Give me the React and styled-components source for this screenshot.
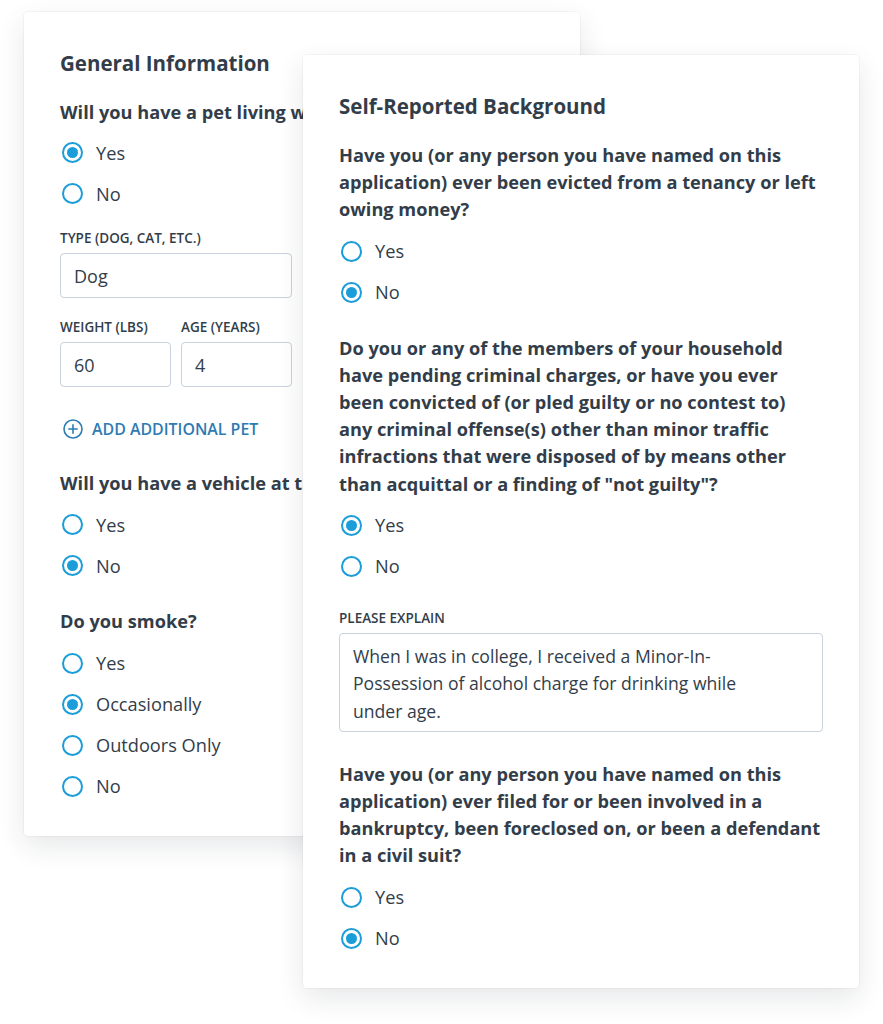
import styled, { createGlobalStyle } from "styled-components";

const GlobalStyle = createGlobalStyle`
  body {
    margin: 0;
    background: #ffffff;
    font-family: "Open Sans", "Noto Sans", sans-serif;
    color: #323d49;
  }
`;

const Stage = styled.div`
  width: 883px;
  height: 1024px;
  display: grid;
  grid-template-columns: 1fr;
  grid-template-rows: 1fr;
  overflow: hidden;
`;

const Card = styled.div`
  grid-area: 1 / 1;
  align-self: start;
  justify-self: start;
  width: 556px;
  box-sizing: border-box;
  margin: ${(p) => p.$top}px 0 0 ${(p) => p.$left}px;
  padding: 37px 36px 29px;
  background: #fff;
  border-radius: 4px;
  box-shadow: 0 10px 28px rgba(30, 40, 50, 0.11), 0 0 0 1px rgba(30, 40, 50, 0.035);
  display: flex;
  flex-direction: column;
  position: relative;
  z-index: ${(p) => p.$z};
`;

const Title = styled.h2`
  margin: 0;
  font-size: 20.5px;
  line-height: 28px;
  font-weight: 700;
`;

const Question = styled.p`
  margin: ${(p) => p.$gap ?? 22}px 0 0;
  font-size: 18.2px;
  line-height: 27.2px;
  font-weight: 700;
  white-space: ${(p) => (p.$nowrap ? "nowrap" : "normal")};
`;

const Options = styled.div`
  display: flex;
  flex-direction: column;
  margin-top: ${(p) => p.$gap ?? 7}px;
`;

const Option = styled.label`
  display: flex;
  align-items: center;
  gap: 13px;
  height: 41px;
  padding-left: 2px;
  font-size: 18.2px;
  font-weight: 400;
`;

const Circle = styled.span`
  width: 21px;
  height: 21px;
  box-sizing: border-box;
  border: 2px solid #1a9dd9;
  border-radius: 50%;
  display: flex;
  align-items: center;
  justify-content: center;

  &::after {
    content: "";
    width: 11px;
    height: 11px;
    border-radius: 50%;
    background: ${(p) => (p.$on ? "#1a9dd9" : "transparent")};
  }
`;

const Field = styled.div`
  display: flex;
  flex-direction: column;
  gap: 6px;
  margin-top: ${(p) => p.$gap ?? 20}px;
`;

const FieldRow = styled.div`
  display: flex;
  gap: 10px;
  margin-top: 20px;
`;

const Label = styled.span`
  font-size: 13.5px;
  line-height: 18px;
  font-weight: 600;
  text-transform: uppercase;
`;

const Input = styled.div`
  width: ${(p) => p.$w}px;
  height: 45px;
  box-sizing: border-box;
  border: 1px solid #c9d2dc;
  border-radius: 4px;
  padding: 0 13px;
  display: flex;
  align-items: center;
  font-size: 18px;
`;

const TextArea = styled.div`
  box-sizing: border-box;
  height: 99px;
  border: 1px solid #c9d2dc;
  border-radius: 4px;
  padding: 9px 40px 0 13px;
  font-size: 17.6px;
  line-height: 27.5px;
`;

const AddLink = styled.div`
  display: flex;
  align-items: center;
  gap: 9px;
  margin-top: 30px;
  padding-left: 3px;
  height: 24px;
  color: #2e7bb1;
  font-size: 15.9px;
  font-weight: 600;
  text-transform: uppercase;
`;

function Radio({ label, on }) {
  return (
    <Option>
      <Circle $on={on} />
      {label}
    </Option>
  );
}

function RadioGroup({ options, value, gap }) {
  return (
    <Options $gap={gap}>
      {options.map((o) => (
        <Radio key={o} label={o} on={o === value} />
      ))}
    </Options>
  );
}

function PlusCircle() {
  return (
    <svg width="20" height="20" viewBox="0 0 20 20" fill="none" stroke="currentColor" strokeWidth="1.6" strokeLinecap="round">
      <circle cx="10" cy="10" r="9" />
      <path d="M10 5.8v8.4M5.8 10h8.4" />
    </svg>
  );
}

export default function App() {
  return (
    <>
      <GlobalStyle />
      <Stage>
        <Card $top={12} $left={24} $z={1}>
          <Title>General Information</Title>
          <Question $nowrap>Will you have a pet living with you?</Question>
          <RadioGroup options={["Yes", "No"]} value="Yes" gap={6} />
          <Field $gap={15}>
            <Label>Type (dog, cat, etc.)</Label>
            <Input $w={232}>Dog</Input>
          </Field>
          <FieldRow>
            <Field $gap={0}>
              <Label>Weight (lbs)</Label>
              <Input $w={111}>60</Input>
            </Field>
            <Field $gap={0}>
              <Label>Age (years)</Label>
              <Input $w={111}>4</Input>
            </Field>
          </FieldRow>
          <AddLink>
            <PlusCircle />
            Add additional pet
          </AddLink>
          <Question $gap={29} $nowrap>Will you have a vehicle at the property?</Question>
          <RadioGroup options={["Yes", "No"]} value="No" />
          <Question>Do you smoke?</Question>
          <RadioGroup options={["Yes", "Occasionally", "Outdoors Only", "No"]} value="Occasionally" />
        </Card>

        <Card $top={55} $left={303} $z={2}>
          <Title>Self-Reported Background</Title>
          <Question>
            Have you (or any person you have named on this application) ever been evicted from a tenancy or left owing money?
          </Question>
          <RadioGroup options={["Yes", "No"]} value="No" />
          <Question>
            Do you or any of the members of your household have pending criminal charges, or have you ever been convicted of (or pled guilty or no contest to) any criminal offense(s) other than minor traffic infractions that were disposed of by means other than acquittal or a finding of "not guilty"?
          </Question>
          <RadioGroup options={["Yes", "No"]} value="Yes" />
          <Field $gap={22}>
            <Label>Please explain</Label>
            <TextArea>
              When I was in college, I received a Minor-In-Possession of alcohol charge for drinking while under age.
            </TextArea>
          </Field>
          <Question $gap={29}>
            Have you (or any person you have named on this application) ever filed for or been involved in a bankruptcy, been foreclosed on, or been a defendant in a civil suit?
          </Question>
          <RadioGroup options={["Yes", "No"]} value="No" />
        </Card>
      </Stage>
    </>
  );
}
